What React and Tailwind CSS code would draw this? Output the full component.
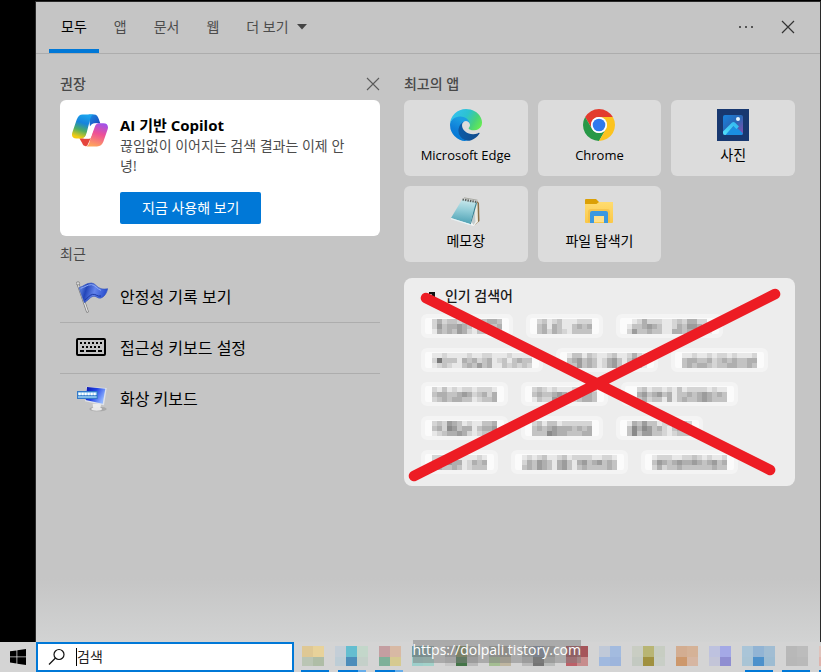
import React, { useState } from 'react';

const tabs = ['모두', '앱', '문서', '웹'];

const CopilotIcon = () => (
    <svg viewBox="0 0 108 98" className="w-9 h-[33px] shrink-0" aria-hidden="true">
        <defs>
            <linearGradient id="cp-left" x1="0.6" y1="0" x2="0.3" y2="1">
                <stop offset="0" stopColor="#1aa5ee" />
                <stop offset="0.35" stopColor="#1683dc" />
                <stop offset="0.65" stopColor="#4fae62" />
                <stop offset="0.95" stopColor="#f4cb12" />
            </linearGradient>
            <linearGradient id="cp-right" x1="0.7" y1="0" x2="0.4" y2="1">
                <stop offset="0" stopColor="#a052ea" />
                <stop offset="0.45" stopColor="#ee5096" />
                <stop offset="1" stopColor="#ffa45c" />
            </linearGradient>
            <linearGradient id="cp-fold" x1="0" y1="0" x2="1" y2="1">
                <stop offset="0" stopColor="#1b8fe6" />
                <stop offset="1" stopColor="#1a3fb4" />
            </linearGradient>
        </defs>
        <path d="M50 1h16c8 0 12 6 14 13l5 14H70c-8 0-12 4-16 10z" fill="url(#cp-fold)" />
        <path d="M22 72h34l-9 20c-1 3-3 4-6 4-6 0-9-4-11-10z" fill="#e5443c" />
        <path d="M32 1h34c-6 1-9 5-11 12L44 56c-3 11-7 17-17 17H13C1 73-2 65 1 55L14 17C18 6 23 1 32 1z" fill="url(#cp-left)" />
        <path d="M68 27h26c12 0 16 8 13 18L94 83c-4 9-9 14-19 14H40c7 0 10-5 12-12l12-42c2-7 2-12 4-16z" fill="url(#cp-right)" />
        <path d="M54 38c3-8 8-11 16-11h10c-7 1-10 5-12 12L58 66c-2 5-5 8-10 8H30c9-1 12-8 15-17z" fill="#fff" />
    </svg>
);

const EdgeIcon = () => (
    <svg viewBox="0 0 256 256" className="w-8 h-8" aria-hidden="true">
        <defs>
            <linearGradient id="ed-a" x1="0.2" y1="0.5" x2="1" y2="0.5">
                <stop offset="0" stopColor="#0c59a4" />
                <stop offset="1" stopColor="#114a8b" />
            </linearGradient>
            <linearGradient id="ed-b" x1="0.6" y1="0.2" x2="0.3" y2="1">
                <stop offset="0" stopColor="#1b9de2" />
                <stop offset="0.5" stopColor="#0f7fd8" />
                <stop offset="1" stopColor="#0078d4" />
            </linearGradient>
            <linearGradient id="ed-c" x1="0" y1="0.3" x2="1" y2="0.7">
                <stop offset="0" stopColor="#35c1f1" />
                <stop offset="0.45" stopColor="#2cc2d0" />
                <stop offset="0.75" stopColor="#48d27c" />
                <stop offset="1" stopColor="#66eb52" />
            </linearGradient>
        </defs>
        <path fill="url(#ed-a)" d="M231.07 190.54a94.07 94.07 0 0 1-10.57 4.74 101.87 101.87 0 0 1-35.9 6.46c-47.32 0-88.54-32.55-88.54-74.32a31.48 31.48 0 0 1 16.43-27.31c-42.8 1.8-53.8 46.4-53.8 72.53 0 73.88 68.09 81.37 82.76 81.37 7.91 0 19.84-2.3 27-4.56l1.31-.44a128.34 128.34 0 0 0 66.6-52.8 4 4 0 0 0-5.29-5.67z" />
        <path fill="url(#ed-b)" d="M105.73 241.42a79.2 79.2 0 0 1-22.74-21.34 80.72 80.72 0 0 1 29.5-120c3.12-1.47 8.45-4.13 15.54-4a32.35 32.35 0 0 1 25.69 13 31.88 31.88 0 0 1 6.36 18.66c0-.21 24.46-79.6-80-79.6-43.9 0-80 41.66-80 78.21a130.15 130.15 0 0 0 12.11 56 128 128 0 0 0 156.38 67.11 75.55 75.55 0 0 1-62.78-8z" />
        <path fill="url(#ed-c)" d="M152.33 148.86c-.81 1.05-3.3 2.5-3.3 5.66 0 2.61 1.7 5.12 4.72 7.23 14.38 10 41.49 8.68 41.56 8.68a59.56 59.56 0 0 0 30.27-8.35 61.38 61.38 0 0 0 30.43-52.88c.26-22.41-8-37.31-11.34-43.91C223.46 23.84 177.72 0 128 0A128 128 0 0 0 0 126.2c.48-36.54 36.8-66.05 80-66.05 3.5 0 23.46.34 42 10.07 16.34 8.58 24.9 18.94 30.85 29.21 6.18 10.67 7.28 24.15 7.28 29.52 0 5.37-2.74 13.33-7.8 19.91z" />
    </svg>
);

const ChromeIcon = () => (
    <svg viewBox="0 0 48 48" className="w-8 h-8" aria-hidden="true">
        <path fill="#e33b2e" d="M24 12h20.78A24 24 0 0 0 3.22 12l10.39 18A12 12 0 0 1 24 12z" />
        <path fill="#279847" d="M34.39 30 24 48A24 24 0 0 1 3.22 12l10.39 18a12 12 0 0 0 20.78 0z" />
        <path fill="#fcc31e" d="M34.39 30 24 48A24 24 0 0 0 44.78 12H24a12 12 0 0 1 10.39 18z" />
        <circle cx="24" cy="24" r="12" fill="#fff" />
        <circle cx="24" cy="24" r="9.5" fill="#3079ee" />
    </svg>
);

const PhotosIcon = () => (
    <svg viewBox="0 0 32 32" className="w-8 h-8" aria-hidden="true">
        <defs>
            <linearGradient id="ph-sky" x1="0" y1="0" x2="1" y2="1">
                <stop offset="0" stopColor="#1784e0" />
                <stop offset="0.5" stopColor="#2b66b4" />
                <stop offset="1" stopColor="#8a4fae" />
            </linearGradient>
            <linearGradient id="ph-hill" x1="1" y1="0" x2="0" y2="1">
                <stop offset="0" stopColor="#2fb4ee" />
                <stop offset="1" stopColor="#52e0fb" />
            </linearGradient>
        </defs>
        <path fill="#183870" d="M0 0h32v32H0z" />
        <rect x="6" y="6" width="20" height="20" rx="2" fill="url(#ph-sky)" />
        <path d="M8 26 17.500 16.500 26 24.500q-.500 1.500-2 1.500z" fill="#1a8fe2" />
        <path d="M6 22.500 14.800 13.700q1.700-1.500 3.400 0L22 17.500l-2.500 2.500-3-3L8.500 26H8q-2 0-2-2z" fill="url(#ph-hill)" />
        <circle cx="21" cy="10" r="2" fill="#e8f6ff" />
    </svg>
);

const NotepadIcon = () => (
    <svg viewBox="0 0 32 32" className="w-8 h-8" aria-hidden="true">
        <defs>
            <linearGradient id="np-front" x1="0.5" y1="0" x2="0.4" y2="1">
                <stop offset="0" stopColor="#c9e8ec" />
                <stop offset="0.45" stopColor="#8fcbd6" />
                <stop offset="1" stopColor="#4a9fb2" />
            </linearGradient>
        </defs>
        <path d="M27 6l2 2 .5 18-4 3.500-2-2z" fill="#8b7048" />
        <path d="M25 7 27.500 8 28 27l-4 3.500z" fill="#ece9dc" />
        <path d="M25 7l1.500 20-3 4-8-2.500-4-3z" fill="#f4f7f7" />
        <path d="M25 8l.5 19-2 3-2-3z" fill="#c4cccc" />
        <path d="M12 4.500 26 7 20 29 1 23z" fill="url(#np-front)" />
        <path d="M1 23 20 29l-.5 1L1 24.200z" fill="#e8f4f6" />
        <path d="M26 7 20 29l.8.2L27 8z" fill="#358294" />
        <path d="M12.500 4.500 26.500 7" stroke="#5c625e" strokeWidth="2.200" strokeDasharray="1.500 1" />
        <path d="m14 2.800 13.500 2.400" stroke="#a9aaa3" strokeWidth="1" />
    </svg>
);

const ExplorerIcon = () => (
    <svg viewBox="0 0 32 32" className="w-8 h-8" aria-hidden="true">
        <defs>
            <linearGradient id="ex-f" x1="0" y1="0" x2="0" y2="1">
                <stop offset="0" stopColor="#ffdc70" />
                <stop offset="1" stopColor="#fbc847" />
            </linearGradient>
        </defs>
        <path d="M3 4h10l3 3v3H2V5q0-1 1-1z" fill="#dba005" />
        <path d="M2 9h11.500l2.500-2H30v20q0 1-1 1H3q-1 0-1-1z" fill="url(#ex-f)" />
        <path d="M5 27V17q0-3 3-3h16q3 0 3 3v10z" fill="#edb53a" opacity=".5" />
        <path d="M7 28V18q0-2 2-2h14q2 0 2 2v10h-4v-7H11v7z" fill="#3b98df" />
        <path d="M11 21h10v6H11z" fill="#ffe08a" />
    </svg>
);

const FlagIcon = () => (
    <svg viewBox="0 0 96 96" className="w-8 h-8" aria-hidden="true">
        <defs>
            <linearGradient id="fl" x1="0" y1="0" x2="1" y2="0.2">
                <stop offset="0" stopColor="#7ba0f2" />
                <stop offset="0.3" stopColor="#2345b8" />
                <stop offset="0.6" stopColor="#6484ec" />
                <stop offset="1" stopColor="#2b50cf" />
            </linearGradient>
        </defs>
        <path d="M6 9 34 91" stroke="#777" strokeWidth="8" strokeLinecap="round" />
        <path d="M6 9 34 91" stroke="#e2e2e2" strokeWidth="4" strokeLinecap="round" />
        <circle cx="6" cy="7" r="5" fill="#d8d8d8" stroke="#777" strokeWidth="2" />
        <path d="M9 20C24 16 30 6 46 6c12 0 16 14 29 17 8 2 14 1 20 0-3 13-9 24-20 28-10 3-15-8-24-5-9 2-14 13-26 19z" fill="url(#fl)" stroke="#3555bd" strokeWidth="2" />
        <path d="M14 22c13-3 19-11 32-11 12 0 17 14 29 17" fill="none" stroke="#8daaf6" strokeWidth="3" />
        <path d="M26 57c9-5 14-15 24-17 9-2 14 8 25 5" fill="none" stroke="#1c37a2" strokeWidth="3" />
    </svg>
);

const KeyboardIcon = () => (
    <svg viewBox="0 0 32 32" className="w-8 h-8" aria-hidden="true">
        <rect x="1" y="7" width="28" height="16" rx="1" fill="none" stroke="#000" strokeWidth="2" />
        <path d="M4 11h22" stroke="#000" strokeWidth="2" strokeDasharray="2 2" />
        <path d="M6 15h20" stroke="#000" strokeWidth="2" strokeDasharray="2 2" />
        <path d="M4 19h4m2 0h10m2 0h4" stroke="#000" strokeWidth="2" />
    </svg>
);

const ScreenKeyboardIcon = () => (
    <svg viewBox="0 0 96 96" className="w-8 h-8" aria-hidden="true">
        <defs>
            <linearGradient id="sk" x1="0" y1="0" x2="1" y2="0.5">
                <stop offset="0" stopColor="#0a12a8" />
                <stop offset="0.5" stopColor="#2244e6" />
                <stop offset="1" stopColor="#8fb4ff" />
            </linearGradient>
        </defs>
        <ellipse cx="66" cy="78" rx="26" ry="7" fill="#a9a9a9" />
        <path d="M50 62h26l-4 16H52z" fill="#ececec" />
        <ellipse cx="62" cy="78" rx="16" ry="5" fill="#e9e9e9" />
        <path d="M31 11 92 15 84 67 27 55z" fill="#dfe3ea" />
        <path d="M33 12 88 17 80 62 29 51z" fill="url(#sk)" />
        <path d="M3 24h62v24H3z" fill="#3278c8" />
        <path d="M6 28h56v8H6zM6 40h56v4H6z" fill="#9fd4f5" />
        <path d="M8 33h54" stroke="#fff" strokeWidth="8" strokeDasharray="6 3" />
    </svg>
);

const topApps = [
    { name: 'Microsoft Edge', Icon: EdgeIcon, latin: true },
    { name: 'Chrome', Icon: ChromeIcon, latin: true },
    { name: '사진', Icon: PhotosIcon },
    { name: '메모장', Icon: NotepadIcon },
    { name: '파일 탐색기', Icon: ExplorerIcon },
];

const recents = [
    { name: '안정성 기록 보기', Icon: FlagIcon },
    { name: '접근성 키보드 설정', Icon: KeyboardIcon },
    { name: '화상 키보드', Icon: ScreenKeyboardIcon },
];

// one string per line of blocks, each digit is how dark the block is
const trending = [
    [
        ['24233231123443', '25344543114334', '14343542133343'],
        ['23123111222', '34143113434', '34243213333'],
        ['01242221123244220', '13345431124355421', '25334331144344331'],
    ],
    [
        ['11211112112211121111', '27333143423412313433', '12321134353411323232'],
        ['1331321123112421', '3453431245313531', '3353431245312331'],
        ['112112122121112', '344334234343344', '343443233443343'],
    ],
    [
        ['2131212212221', '3443345423424', '2343443312334'],
        ['2321211122122', '3433454213443', '1322543223443'],
        ['0231221213122221211', '0453453413343454343', '0342331413433454333'],
    ],
    [
        ['2325431211334', '3426534413445', '1234454212333'],
        ['231331222222', '343454443434', '333654433344'],
        ['1435331221332', '3646534213445', '3635533212333'],
    ],
    [
        ['22222111121', '35454412434', '24334312333'],
        ['1212311231222211221', '2435431453145345343', '3435431453134333343'],
        ['122211223212112', '354345445434534', '242334333333433'],
    ],
];

const Mosaic = ({ lines }) => (
    <svg width={lines[0].length * 5} height="15" shapeRendering="crispEdges" aria-hidden="true">
        {lines.map((line, y) =>
            line.split('').map((d, x) => (
                <rect key={`${x}-${y}`} x={x * 5} y={y * 5} width="5" height="5" fill="#000" fillOpacity={d * 0.075} />
            ))
        )}
    </svg>
);

const taskbarApps = [
    ['#dfc894', '#e8d29a', '#bac5b4', '#afbda6'],
    ['#c4ced7', '#64bed0', '#c3d7ca', '#bdcdd6', '#4c8dba', '#c4d0c9'],
    ['#c49ea1', '#d8b9a4', '#7eb099', '#d6ca91'],
    ['#6e9b9d', '#7b9fa2', '#9dcfcb', '#a2d2ca'],
    ['#aaaaaa', '#77834c', '#a6a8a2', '#c6c6c6', '#447548', '#b8b8b8'],
    ['#9a9d94', '#9b968c', '#a4be92', '#bfb6a0'],
    ['#a2a2a2', '#79859b', '#a5a5a5', '#b8b8b8', '#757575', '#b8bab9'],
    ['#9c4148', '#a6555a', '#bc6068', '#c78c8c'],
    ['#c0c9d8', '#a3bbdf', '#a0b9df', '#9db5dc'],
    ['#c9cdc3', '#b8b574', '#c7cdc2', '#c3c9c1', '#a09140', '#c8cec6'],
    ['#d3ad91', '#d5b297', '#cd986c', '#d6b6a2'],
    ['#bec2df', '#a4a9e6', '#c3c5d8', '#8f8ed1'],
    ['#aac5d8', '#92b4d4', '#a1bdd3', '#a9c4d5', '#4d91cb', '#9dbcd2'],
    ['#b8b8b8', '#bcbcbc', '#b7b7b7', '#b9b9b9'],
    ['#dfc3bc', '#dfc3bc', '#dfb3ac', '#dfc3bc'],
];

const indicators = ['one', 'many', 'many', '', '', '', '', '', '', '', '', '', 'one', 'one', 'one'];

const App = () => {
    const [activeTab, setActiveTab] = useState('모두');
    const [showTip, setShowTip] = useState(true);
    const [query, setQuery] = useState('');

    return (
        <div className="min-h-screen flex flex-col bg-black overflow-hidden text-sm leading-5 text-black font-['Open_Sans','Noto_Sans_CJK_KR',sans-serif]">
            <div className="flex-1 flex pl-[35px] pt-[1px]">
                <div className="flex-1 min-w-0 border-t border-x border-[#2a2a2a] bg-linear-to-b from-[#c5c5c5] from-90% to-[#d2d3d3]">
                    {/* Scope tabs */}
                    <header className="flex items-stretch justify-between h-[52px] pl-[13px] pr-6 border-b border-[#adadad]">
                        <nav className="flex gap-[3px]">
                            {tabs.map((tab) => (
                                <button
                                    key={tab}
                                    onClick={() => setActiveTab(tab)}
                                    className={`px-3 pt-0.5 border-b-4 ${activeTab === tab ? 'border-[#0078d7] text-black' : 'border-transparent text-[#4c4c4c]'}`}
                                >
                                    {tab}
                                </button>
                            ))}
                            <button className="flex items-center gap-2 px-3 pb-0.5 text-[#4c4c4c]">
                                더 보기
                                <svg width="10" height="6" aria-hidden="true">
                                    <path d="M0 0h10L5 5.500z" fill="#444" />
                                </svg>
                            </button>
                        </nav>
                        <div className="flex items-center gap-6 pb-0.5 text-[#333]">
                            <button aria-label="옵션">
                                <svg width="18" height="4" aria-hidden="true">
                                    <path d="M1 1h2v2H1zM7 1h2v2H7zM13 1h2v2h-2z" fill="#555" />
                                </svg>
                            </button>
                            <button aria-label="닫기">
                                <svg width="16" height="16" fill="none" stroke="currentColor" strokeWidth="1.200" aria-hidden="true">
                                    <path d="m2 2 12 12M14 2 2 14" />
                                </svg>
                            </button>
                        </div>
                    </header>

                    <div className="grid grid-cols-[minmax(0,9fr)_minmax(0,11fr)] items-start gap-6 pl-6 pr-[25px] pt-5 pb-10">
                        <section>
                            {showTip && (
                                <>
                                    <div className="flex items-center justify-between mb-1.5">
                                        <h2 className="font-medium text-[#484848]">권장</h2>
                                        <button aria-label="권장 닫기" onClick={() => setShowTip(false)}>
                                            <svg width="14" height="14" fill="none" stroke="#5a5a5a" strokeWidth="1.100" aria-hidden="true">
                                                <path d="m1 1 12 12M13 1 1 13" />
                                            </svg>
                                        </button>
                                    </div>
                                    <div className="flex gap-3 bg-white rounded-md px-3 pt-3.5 pb-3 mb-2">
                                        <CopilotIcon />
                                        <div className="min-w-0 pr-4">
                                            <h3 className="font-bold text-[15px] leading-[22px]">AI 기반 Copilot</h3>
                                            <p className="break-all text-[#4c4c4c]">끊임없이 이어지는 검색 결과는 이제 안녕!</p>
                                            <button className="mt-4 h-8 px-[22px] rounded-xs bg-[#0078d7] text-white">지금 사용해 보기</button>
                                        </div>
                                    </div>
                                </>
                            )}
                            <h2 className="mb-2 text-[#484848]">최근</h2>
                            <ul className="divide-y divide-[#adadad]">
                                {recents.map(({ name, Icon }) => (
                                    <li key={name}>
                                        <button className="flex items-center gap-3 w-full h-[50px] pl-4 text-base text-left">
                                            <Icon /> {name}
                                        </button>
                                    </li>
                                ))}
                            </ul>
                        </section>

                        <section>
                            <h2 className="mb-1.5 font-medium text-[#484848]">최고의 앱</h2>
                            <div className="grid grid-cols-3 gap-2.5">
                                {topApps.map(({ name, Icon, latin }) => (
                                    <button
                                        key={name}
                                        className={`flex flex-col items-center gap-1 h-[76px] pt-[9px] rounded-md bg-[#dcdcdc] ${latin ? 'text-[13px]' : ''}`}
                                    >
                                        <Icon />
                                        <span className="leading-5">{name}</span>
                                    </button>
                                ))}
                            </div>

                            {/* Trending searches, struck out */}
                            <div className="relative mt-4 px-[17px] pt-2 pb-3 rounded-lg bg-[#ededed]">
                                <h3 className="flex items-center gap-2 mb-2 font-medium text-[#1a1a1a]">
                                    <svg width="16" height="16" fill="none" stroke="#111" strokeWidth="2" aria-hidden="true">
                                        <path d="m1 12 5-5 3 3 4-5M8 5h5v5" />
                                    </svg>
                                    인기 검색어
                                </h3>
                                <div className="flex flex-col gap-2.5">
                                    {trending.map((row, i) => (
                                        <div key={i} className="flex gap-[13px]">
                                            {row.map((lines, j) => (
                                                <button key={j} aria-label="검색어" className="flex items-center justify-center h-6 px-[7px] border-4 border-[#f4f4f4] rounded-md bg-[#fbfbfb]">
                                                    <Mosaic lines={lines} />
                                                </button>
                                            ))}
                                        </div>
                                    ))}
                                </div>
                                <svg
                                    viewBox="0 0 392 208"
                                    preserveAspectRatio="none"
                                    className="absolute inset-0 w-full h-full pointer-events-none"
                                    aria-hidden="true"
                                >
                                    <path d="M22 20 367 192M10 198 372 16" stroke="#ed1c24" strokeWidth="10.500" strokeLinecap="round" />
                                </svg>
                            </div>
                        </section>
                    </div>
                </div>
            </div>

            {/* Taskbar */}
            <footer className="relative flex h-[30px] bg-[#d4d4d4]">
                <button aria-label="시작" className="flex items-center justify-center w-9">
                    <svg width="16" height="16" aria-hidden="true">
                        <path d="M0 2.300 6.500 1.400v6.100H0zM7.300 1.300 16 0v7.500H7.300zM0 8.300h6.500v6.200L0 13.600zM7.300 8.300H16V16l-8.700-1.300z" />
                    </svg>
                </button>
                <label className="flex items-center gap-2.5 w-[258px] pl-2.5 border-2 border-[#0078d7] bg-white">
                    <svg width="18" height="18" fill="none" stroke="#111" strokeWidth="1.200" className="shrink-0" aria-hidden="true">
                        <circle cx="11" cy="6.500" r="5" />
                        <path d="M7.500 10 1 16.500" />
                    </svg>
                    <span className="flex items-center flex-1 min-w-0">
                        <span className="w-px h-[18px] bg-black"></span>
                        <input
                            type="text"
                            aria-label="검색"
                            placeholder="검색"
                            value={query}
                            onChange={(e) => setQuery(e.target.value)}
                            className="w-full min-w-0 outline-none placeholder:text-[#222]"
                        />
                    </span>
                </label>
                <div className="flex-1 min-w-0 flex flex-col justify-between pt-1 pl-[7px] overflow-hidden">
                    <div className="flex gap-[11px] pl-px">
                        {taskbarApps.map((cells, i) => (
                            <div key={i} className={`grid shrink-0 grid-rows-[11px_9px] ${cells.length === 6 ? 'grid-cols-[11px_11px_11px]' : 'grid-cols-[11px_11px]'}`}>
                                {cells.map((color, j) => (
                                    <span key={j} style={{ background: color }}></span>
                                ))}
                            </div>
                        ))}
                    </div>
                    <div className="flex gap-[9px]">
                        {indicators.map((kind, i) => (
                            <span key={i} className={`flex justify-end shrink-0 w-7 h-0.5 ${kind ? 'bg-[#0078d7]' : ''}`}>
                                {kind === 'many' && <span className="w-2 bg-[#67aeea]"></span>}
                            </span>
                        ))}
                    </div>
                </div>
                <a
                    href="https://dolpali.tistory.com"
                    className="absolute left-1/2 -top-0.5 ml-0.5 h-[23px] leading-5 text-sm text-white bg-[#808080]/50"
                >
                    https://dolpali.tistory.com
                </a>
            </footer>
        </div>
    );
};

export default App;
